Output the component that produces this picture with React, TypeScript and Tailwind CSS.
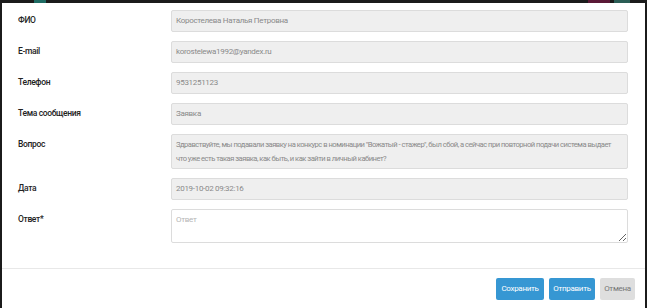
import React from "react";

const fields = [
  { label: "ФИО", value: "Коростелева Наталья Петровна" },
  { label: "E-mail", value: "korostelewa1992@yandex.ru" },
  { label: "Телефон", value: "9531251123" },
  { label: "Тема сообщения", value: "Заявка" },
];

const question =
  "Здравствуйте, мы подавали заявку на конкурс в номинации \"Вожатый - стажер\", был сбой, а сейчас при повторной подачи система выдает что уже есть такая заявка, как быть, и как зайти в личный кабинет?";

const font = { fontFamily: "Roboto, 'Liberation Sans', sans-serif" };

function Label({ text }: { text: string }) {
  return (
    <div className="w-[153px] shrink-0 pt-[4px] text-[8.5px] leading-[12px] font-medium tracking-[-0.35px] text-[#222]">
      {text}
    </div>
  );
}

function Field({ text }: { text: string }) {
  return (
    <div className="flex h-[22px] flex-1 items-center rounded-[2px] border border-[#dcdcdc] bg-[#efefef] pl-[4px] text-[8px] tracking-[-0.3px] text-[#8a8a8a]">
      {text}
    </div>
  );
}

export default function App() {
  return (
    <div className="flex h-[308px] w-[647px] flex-col overflow-hidden bg-[#1b1b1b]" style={font}>
      {/* кусочек фона над модалкой */}
      <div className="flex h-[3px] shrink-0">
        <div className="w-[34px]" />
        <div className="w-[12px] bg-[#1e6b63]" />
        <div className="w-[542px]" />
        <div className="w-[22px] bg-[#5a1836]" />
        <div className="w-[4px]" />
        <div className="w-[16px] bg-[#2a5d55]" />
      </div>

      <div className="ml-[2px] mr-[2px] flex flex-1 flex-col bg-white">
        <div className="flex flex-col gap-[9px] pt-[7px] pr-[17px] pb-[25px] pl-[16px]">
          {fields.map((f) => (
            <div key={f.label} className="flex">
              <Label text={f.label} />
              <Field text={f.value} />
            </div>
          ))}

          <div className="flex">
            <Label text="Вопрос" />
            <div className="h-[35px] flex-1 rounded-[2px] border border-[#dcdcdc] bg-[#efefef] pl-[4px] pr-[14px] pt-[3px] text-[7.6px] leading-[14px] tracking-[-0.5px] text-[#8a8a8a]">
              {question}
            </div>
          </div>

          <div className="flex">
            <Label text="Дата" />
            <Field text="2019-10-02 09:32:16" />
          </div>

          <div className="flex">
            <Label text="Ответ*" />
            <textarea
              placeholder="Ответ"
              className="h-[34px] flex-1 rounded-[2px] border border-[#dcdcdc] bg-white px-[4px] pt-[4px] text-[8px] leading-[12px] tracking-[-0.3px] text-[#555] placeholder:text-[#b5b5b5] outline-none"
            />
          </div>
        </div>

        <div className="flex justify-end gap-[5px] border-t border-[#e8e8e8] pt-[9px] pr-[10px]">
          <button className="h-[22px] w-[48px] rounded-[2px] bg-[#3697d3] text-[8px] tracking-[-0.3px] text-white">
            Сохранить
          </button>
          <button className="h-[22px] w-[46px] rounded-[2px] bg-[#3697d3] text-[8px] tracking-[-0.3px] text-white">
            Отправить
          </button>
          <button className="h-[22px] w-[35px] rounded-[2px] bg-[#dedede] text-[8px] tracking-[-0.3px] text-[#777]">
            Отмена
          </button>
        </div>
      </div>
    </div>
  );
}
